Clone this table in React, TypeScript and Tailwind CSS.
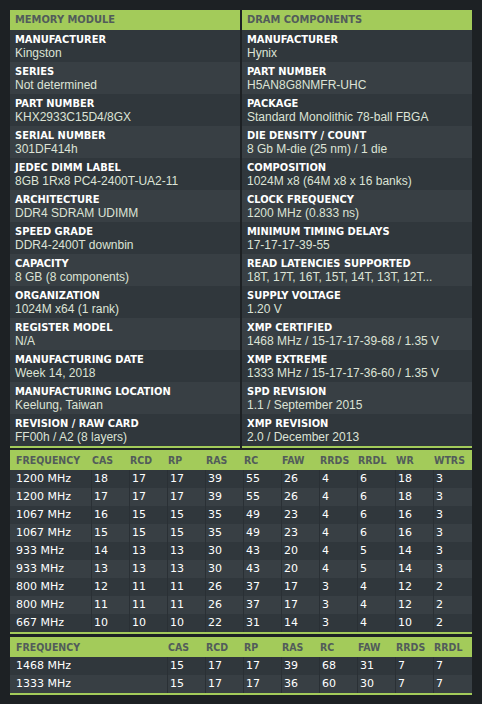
import React from "react";

type Spec = { label: string; value: string };

const moduleSpecs: Spec[] = [
  { label: "MANUFACTURER", value: "Kingston" },
  { label: "SERIES", value: "Not determined" },
  { label: "PART NUMBER", value: "KHX2933C15D4/8GX" },
  { label: "SERIAL NUMBER", value: "301DF414h" },
  { label: "JEDEC DIMM LABEL", value: "8GB 1Rx8 PC4-2400T-UA2-11" },
  { label: "ARCHITECTURE", value: "DDR4 SDRAM UDIMM" },
  { label: "SPEED GRADE", value: "DDR4-2400T downbin" },
  { label: "CAPACITY", value: "8 GB (8 components)" },
  { label: "ORGANIZATION", value: "1024M x64 (1 rank)" },
  { label: "REGISTER MODEL", value: "N/A" },
  { label: "MANUFACTURING DATE", value: "Week 14, 2018" },
  { label: "MANUFACTURING LOCATION", value: "Keelung, Taiwan" },
  { label: "REVISION / RAW CARD", value: "FF00h / A2 (8 layers)" },
];

const dramSpecs: Spec[] = [
  { label: "MANUFACTURER", value: "Hynix" },
  { label: "PART NUMBER", value: "H5AN8G8NMFR-UHC" },
  { label: "PACKAGE", value: "Standard Monolithic 78-ball FBGA" },
  { label: "DIE DENSITY / COUNT", value: "8 Gb M-die (25 nm) / 1 die" },
  { label: "COMPOSITION", value: "1024M x8 (64M x8 x 16 banks)" },
  { label: "CLOCK FREQUENCY", value: "1200 MHz (0.833 ns)" },
  { label: "MINIMUM TIMING DELAYS", value: "17-17-17-39-55" },
  { label: "READ LATENCIES SUPPORTED", value: "18T, 17T, 16T, 15T, 14T, 13T, 12T..." },
  { label: "SUPPLY VOLTAGE", value: "1.20 V" },
  { label: "XMP CERTIFIED", value: "1468 MHz / 15-17-17-39-68 / 1.35 V" },
  { label: "XMP EXTREME", value: "1333 MHz / 15-17-17-36-60 / 1.35 V" },
  { label: "SPD REVISION", value: "1.1 / September 2015" },
  { label: "XMP REVISION", value: "2.0 / December 2013" },
];

const jedecHead = ["FREQUENCY", "CAS", "RCD", "RP", "RAS", "RC", "FAW", "RRDS", "RRDL", "WR", "WTRS"];
const jedecRows = [
  ["1200 MHz", "18", "17", "17", "39", "55", "26", "4", "6", "18", "3"],
  ["1200 MHz", "17", "17", "17", "39", "55", "26", "4", "6", "18", "3"],
  ["1067 MHz", "16", "15", "15", "35", "49", "23", "4", "6", "16", "3"],
  ["1067 MHz", "15", "15", "15", "35", "49", "23", "4", "6", "16", "3"],
  ["933 MHz", "14", "13", "13", "30", "43", "20", "4", "5", "14", "3"],
  ["933 MHz", "13", "13", "13", "30", "43", "20", "4", "5", "14", "3"],
  ["800 MHz", "12", "11", "11", "26", "37", "17", "3", "4", "12", "2"],
  ["800 MHz", "11", "11", "11", "26", "37", "17", "3", "4", "12", "2"],
  ["667 MHz", "10", "10", "10", "22", "31", "14", "3", "4", "10", "2"],
];

const xmpHead = ["FREQUENCY", "CAS", "RCD", "RP", "RAS", "RC", "FAW", "RRDS", "RRDL"];
const xmpRows = [
  ["1468 MHz", "15", "17", "17", "39", "68", "31", "7", "7"],
  ["1333 MHz", "15", "17", "17", "36", "60", "30", "7", "7"],
];

const headFont = "font-['DejaVu_Sans_Condensed','DejaVu_Sans',sans-serif] font-bold";

function SpecPanel({ title, specs }: { title: string; specs: Spec[] }) {
  return (
    <div className="flex flex-col border-b-2 border-[#a3cb5a]">
      <div className={`h-5 bg-[#a3cb5a] pl-[5px] text-[11px] leading-5 text-[#525c5a] ${headFont}`}>{title}</div>
      {specs.map((spec, i) => (
        <div key={spec.label} className={`h-8 pl-[5px] pt-[3px] ${i % 2 === 0 ? "bg-[#30373c]" : "bg-[#383f44]"}`}>
          <div className={`text-[11px] leading-[14px] text-white ${headFont}`}>{spec.label}</div>
          <div className="whitespace-nowrap font-['Liberation_Sans',Arial,sans-serif] text-[12px] leading-[13px] text-[#dde3d6]">
            {spec.value}
          </div>
        </div>
      ))}
    </div>
  );
}

function TimingTable({ head, rows, cols }: { head: string[]; rows: string[][]; cols: string }) {
  return (
    <div className="flex flex-col border-b-2 border-[#a3cb5a]">
      <div className={`grid h-5 bg-[#a3cb5a] text-[10.5px] leading-5 text-[#525c5a] ${cols} ${headFont}`}>
        {head.map((h, i) => (
          <div key={h} className={i === 0 ? "pl-[6px]" : "pl-[1px]"}>
            {h}
          </div>
        ))}
      </div>
      {rows.map((row, r) => (
        <div
          key={r}
          className={`grid h-[18px] font-['DejaVu_Sans',sans-serif] text-[11px] leading-[18px] text-white ${cols} ${
            r % 2 === 0 ? "bg-[#30373c]" : "bg-[#383f44]"
          }`}
        >
          {row.map((cell, i) => (
            <div key={i} className={i === 0 ? "pl-[6px]" : "border-l border-[#2a3035] pl-[2px]"}>
              {cell}
            </div>
          ))}
        </div>
      ))}
    </div>
  );
}

export default function App() {
  return (
    <div className="min-h-screen bg-[#1d2124] p-[10px]">
      <div className="flex w-[462px] flex-col">
        <div className="grid grid-cols-2 gap-[2px]">
          <SpecPanel title="MEMORY MODULE" specs={moduleSpecs} />
          <SpecPanel title="DRAM COMPONENTS" specs={dramSpecs} />
        </div>
        <div className="mt-[2px]">
          <TimingTable head={jedecHead} rows={jedecRows} cols="grid-cols-[81px_repeat(9,38px)_1fr]" />
        </div>
        <div className="mt-[3px]">
          <TimingTable head={xmpHead} rows={xmpRows} cols="grid-cols-[157px_repeat(7,38px)_1fr]" />
        </div>
      </div>
    </div>
  );
}
